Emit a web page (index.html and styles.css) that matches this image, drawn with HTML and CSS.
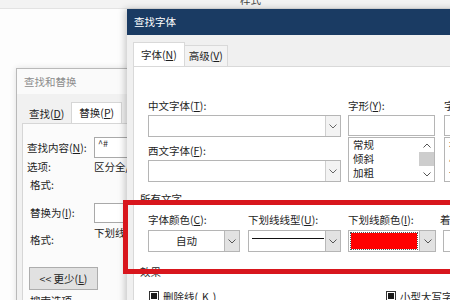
FILE: index.html
```html
<!DOCTYPE html>
<html lang="zh-CN">
<head>
<meta charset="utf-8">
<title>查找字体</title>
<link rel="stylesheet" href="styles.css">
</head>
<body>
<div class="desk">
  <div class="backbar"><span>样式</span></div>

  <div class="win left-win">
    <div class="lw-title">查找和替换</div>
    <div class="lw-tabs">
      <span class="lt">查找(<u>D</u>)</span>
      <span class="lt sel">替换(<u>P</u>)</span>
      <span class="lt">查找</span>
    </div>
    <div class="lw-panel">
      <div class="lrow r1"><span class="llab">查找内容(<u>N</u>):</span><span class="inp">^#</span></div>
      <div class="lrow r2"><span class="llab">选项:</span><span class="val">区分全/半角</span></div>
      <div class="lrow r3 ind"><span class="llab">格式:</span></div>
      <div class="lrow r4 ind"><span class="llab">替换为(<u>I</u>):</span><span class="inp"></span></div>
      <div class="lrow r5 ind"><span class="llab low">格式:</span><span class="val">下划线</span></div>
      <button class="btn">&lt;&lt; 更少(<u>L</u>)</button>
      <div class="lrow r6 ind"><span class="llab">搜索选项</span></div>
    </div>
  </div>

  <div class="win main-win">
    <div class="mw-title">查找字体</div>
    <div class="mw-tabs">
      <span class="mt sel">字体(<u>N</u>)</span>
      <span class="mt">高级(<u>V</u>)</span>
    </div>
    <div class="mw-panel">
      <div class="top">
        <div class="c1">
          <div class="lab">中文字体(<u>T</u>):</div>
          <div class="combo"><span class="cv"></span><span class="arr light"><svg width="8" height="5" viewBox="0 0 8 5"><polyline points="0.5,0.5 4,4 7.5,0.5" fill="none" stroke="#666" stroke-width="1"/></svg></span></div>
          <div class="lab l2">西文字体(<u>F</u>):</div>
          <div class="combo"><span class="cv"></span><span class="arr light"><svg width="8" height="5" viewBox="0 0 8 5"><polyline points="0.5,0.5 4,4 7.5,0.5" fill="none" stroke="#666" stroke-width="1"/></svg></span></div>
        </div>
        <div class="c2">
          <div class="lab">字形(<u>Y</u>):</div>
          <div class="tbox"></div>
          <div class="list">
            <div class="items"><span>常规</span><span>倾斜</span><span>加粗</span></div>
            <div class="sb">
              <span class="sbb"><svg width="8" height="5" viewBox="0 0 8 5"><polyline points="0.5,4.5 4,1 7.5,4.5" fill="none" stroke="#555" stroke-width="1"/></svg></span>
              <span class="thumb"></span>
              <span class="track"></span>
              <span class="sbb"><svg width="8" height="5" viewBox="0 0 8 5"><polyline points="0.5,0.5 4,4 7.5,0.5" fill="none" stroke="#555" stroke-width="1"/></svg></span>
            </div>
          </div>
        </div>
        <div class="c3">
          <div class="lab">字号(<u>S</u>):</div>
          <div class="tbox"></div>
          <div class="list">
            <div class="items"><span>初号</span><span>小初</span><span>一号</span></div>
          </div>
        </div>
      </div>

      <div class="grp">所有文字</div>
      <div class="mid">
        <div class="b1">
          <div class="lab">字体颜色(<u>C</u>):</div>
          <div class="combo"><span class="cv center">自动</span><span class="arr dark"><svg width="8" height="5" viewBox="0 0 8 5"><polyline points="0.5,0.5 4,4 7.5,0.5" fill="none" stroke="#555" stroke-width="1"/></svg></span></div>
        </div>
        <div class="b2">
          <div class="lab">下划线线型(<u>U</u>):</div>
          <div class="combo"><span class="cv"><span class="uline"></span></span><span class="arr dark"><svg width="8" height="5" viewBox="0 0 8 5"><polyline points="0.5,0.5 4,4 7.5,0.5" fill="none" stroke="#555" stroke-width="1"/></svg></span></div>
        </div>
        <div class="b3">
          <div class="lab">下划线颜色(<u>I</u>):</div>
          <div class="combo"><span class="cv pad"><span class="focus"><span class="swatch"></span></span></span><span class="arr dark"><svg width="8" height="5" viewBox="0 0 8 5"><polyline points="0.5,0.5 4,4 7.5,0.5" fill="none" stroke="#555" stroke-width="1"/></svg></span></div>
        </div>
        <div class="b4">
          <div class="lab">着重号(·):</div>
          <div class="combo"><span class="cv"></span></div>
        </div>
      </div>

      <div class="grp g2">效果</div>
      <div class="checks">
        <label class="chk w1"><span class="cb"><span class="cbi"></span></span>删除线(<u>K</u>)</label>
        <label class="chk"><span class="cb"><span class="cbi"></span></span>小型大写字母(<u>M</u>)</label>
      </div>
    </div>
  </div>

  <div class="highlight"></div>
</div>
</body>
</html>
```

FILE: styles.css
```css
html, body {
  margin: 0;
  padding: 0;
}
body {
  width: 450px;
  height: 300px;
  overflow: hidden;
  background: #fdfdfd;
  font-family: "Noto Sans CJK SC", "Noto Sans", sans-serif;
  font-size: 10.5px;
  color: #1e1e1e;
}
u { text-decoration: underline; text-underline-offset: 1px; }

.desk {
  position: relative;
  width: 450px;
  height: 300px;
  overflow: hidden;
  background: #fdfdfd;
}

.backbar {
  height: 8px;
  background: #f3f3f3;
  border-bottom: 1px solid #e3e3e3;
  overflow: hidden;
  padding-left: 240px;
}
.backbar span {
  display: block;
  line-height: 10px;
  margin-top: -5px;
  color: #444;
}

.win {
  position: absolute;
  box-sizing: border-box;
}

/* ---------- left dialog ---------- */
.left-win {
  left: 16px;
  top: 68px;
  width: 130px;
  height: 240px;
  border: 1px solid #b9b9b9;
  background: #f1f1f1;
  box-shadow: 0 0 6px rgba(0, 0, 0, 0.12);
}
.lw-title {
  height: 25px;
  line-height: 25px;
  padding-left: 7px;
  color: #8c8c8c;
  background: #fafafa;
}
.lw-tabs {
  height: 29px;
  display: flex;
  align-items: flex-end;
  padding-left: 5px;
  background: #f1f1f1;
  white-space: nowrap;
}
.lt {
  height: 18px;
  line-height: 18px;
  padding: 0 7px;
  color: #222;
}
.lt.sel {
  height: 20px;
  line-height: 20px;
  background: #fff;
  border: 1px solid #d6d6d6;
  border-bottom: none;
}
.lw-panel {
  margin-left: 5px;
  height: 200px;
  background: #fbfbfb;
  border-top: 1px solid #d6d6d6;
  border-left: 1px solid #d6d6d6;
  padding-left: 4px;
  display: flex;
  flex-direction: column;
  white-space: nowrap;
}
.lrow { display: flex; }
.llab { width: 67px; flex: none; }
.ind { padding-left: 3px; }
.ind .llab { width: 64px; }
.r1 { margin-top: 13px; height: 21px; line-height: 21px; }
.r2 { margin-top: 2px; height: 14px; line-height: 14px; }
.r3 { margin-top: 4px; height: 14px; line-height: 14px; }
.r4 { margin-top: 11px; height: 20px; line-height: 20px; }
.r5 { margin-top: 3px; height: 21px; line-height: 14px; }
.r5 .low { padding-top: 7px; }
.r6 { margin-top: 4px; line-height: 14px; }
.val { color: #222; }
.inp {
  width: 60px;
  height: 100%;
  box-sizing: border-box;
  border: 1px solid #a9a9a9;
  background: #fff;
  padding-left: 3px;
  font-size: 9px;
  line-height: 12px;
}
.btn {
  margin: 20px 0 0 2px;
  width: 69px;
  height: 23px;
  padding: 0;
  border: 1px solid #adadad;
  background: #e1e1e1;
  font-family: inherit;
  font-size: 10.5px;
  color: #222;
}

/* ---------- main dialog ---------- */
.main-win {
  left: 127px;
  top: 9px;
  width: 340px;
  height: 300px;
  background: #f0f0f0;
  box-shadow: -2px 0 7px rgba(0, 0, 0, 0.22);
}
.mw-title {
  height: 26px;
  line-height: 26px;
  padding-left: 7px;
  background: #1a3b63;
  color: #fff;
}
.mw-tabs {
  height: 31px;
  display: flex;
  align-items: flex-end;
  padding-left: 6px;
  white-space: nowrap;
}
.mt {
  height: 20px;
  line-height: 20px;
  padding: 0 4px;
  border: 1px solid #d9d9d9;
  border-bottom: none;
  border-left: none;
  background: #f3f3f3;
}
.mt.sel {
  height: 23px;
  line-height: 23px;
  padding: 0 7px;
  background: #fff;
  border-left: 1px solid #d9d9d9;
}
.mw-panel {
  margin-left: 6px;
  height: 300px;
  background: #fff;
  border-top: 1px solid #d9d9d9;
  border-left: 1px solid #d9d9d9;
  padding: 32px 0 0 14px;
  white-space: nowrap;
}

.lab {
  height: 13px;
  line-height: 13px;
}

.top { display: flex; }
.c1 { width: 193px; flex: none; }
.c2 { width: 87px; flex: none; margin-left: 7px; }
.c3 { width: 87px; flex: none; margin-left: 9px; }
.l2 { margin-top: 7px; }

.combo {
  margin-top: 3px;
  height: 22px;
  box-sizing: border-box;
  border: 1px solid #b5b5b5;
  background: #fff;
  display: flex;
}
.cv { flex: 1; min-width: 0; }
.cv.center {
  text-align: center;
  line-height: 20px;
}
.arr {
  width: 14px;
  flex: none;
  display: flex;
  align-items: center;
  justify-content: center;
  border-left: 1px solid #cfcfcf;
}
.arr.light { background: #f3f3f3; }
.arr.dark { background: #e2e2e2; border-left-color: #b8b8b8; }

.tbox {
  margin-top: 3px;
  height: 21px;
  box-sizing: border-box;
  border: 1px solid #b5b5b5;
}
.list {
  margin-top: 1px;
  height: 45px;
  box-sizing: border-box;
  border: 1px solid #b5b5b5;
  display: flex;
}
.items {
  flex: 1;
  display: flex;
  flex-direction: column;
  padding-left: 4px;
  line-height: 14px;
}
.sb {
  width: 15px;
  flex: none;
  display: flex;
  flex-direction: column;
}
.sbb {
  height: 14px;
  display: flex;
  align-items: center;
  justify-content: center;
}
.thumb {
  height: 14px;
  background: #cdcdcd;
}
.track { flex: 1; }

.grp {
  margin: 10px 0 0 -8px;
  height: 13px;
  line-height: 13px;
}
.g2 { margin-top: 13px; }

.mid {
  display: flex;
  margin-top: 8px;
}
.mid .combo { margin-top: 4px; }
.b1 { width: 92px; flex: none; }
.b2 { width: 93px; flex: none; margin-left: 8px; }
.b3 { width: 88px; flex: none; margin-left: 7px; }
.b4 { width: 60px; flex: none; margin-left: 4px; }
.b4 .combo { margin-left: 3px; }
.arr { width: 14px; }
.b2 .arr { width: 14px; }
.b3 .arr { width: 15px; }

.uline {
  display: block;
  margin: 7px 0 0 3px;
  width: 72px;
  height: 1px;
  background: #111;
}
.cv.pad { padding: 1px; display: flex; }
.focus {
  flex: 1;
  border: 1px dotted #555;
  display: flex;
}
.swatch {
  flex: 1;
  background: #ff0000;
}

.checks {
  display: flex;
  margin-top: 12px;
}
.chk {
  display: flex;
  align-items: center;
  gap: 4px;
  height: 12px;
}
.w1 { width: 238px; flex: none; padding-left: 1px; box-sizing: border-box; }
.cb {
  width: 10px;
  height: 10px;
  box-sizing: border-box;
  border: 1px solid #333;
  display: flex;
  align-items: center;
  justify-content: center;
  background: #fff;
}
.cbi {
  width: 6px;
  height: 6px;
  background: #1a1a1a;
}

/* ---------- red annotation ---------- */
.highlight {
  position: absolute;
  left: 123px;
  top: 200px;
  width: 340px;
  height: 74px;
  box-sizing: border-box;
  border: 5px solid #d8161d;
}
```
